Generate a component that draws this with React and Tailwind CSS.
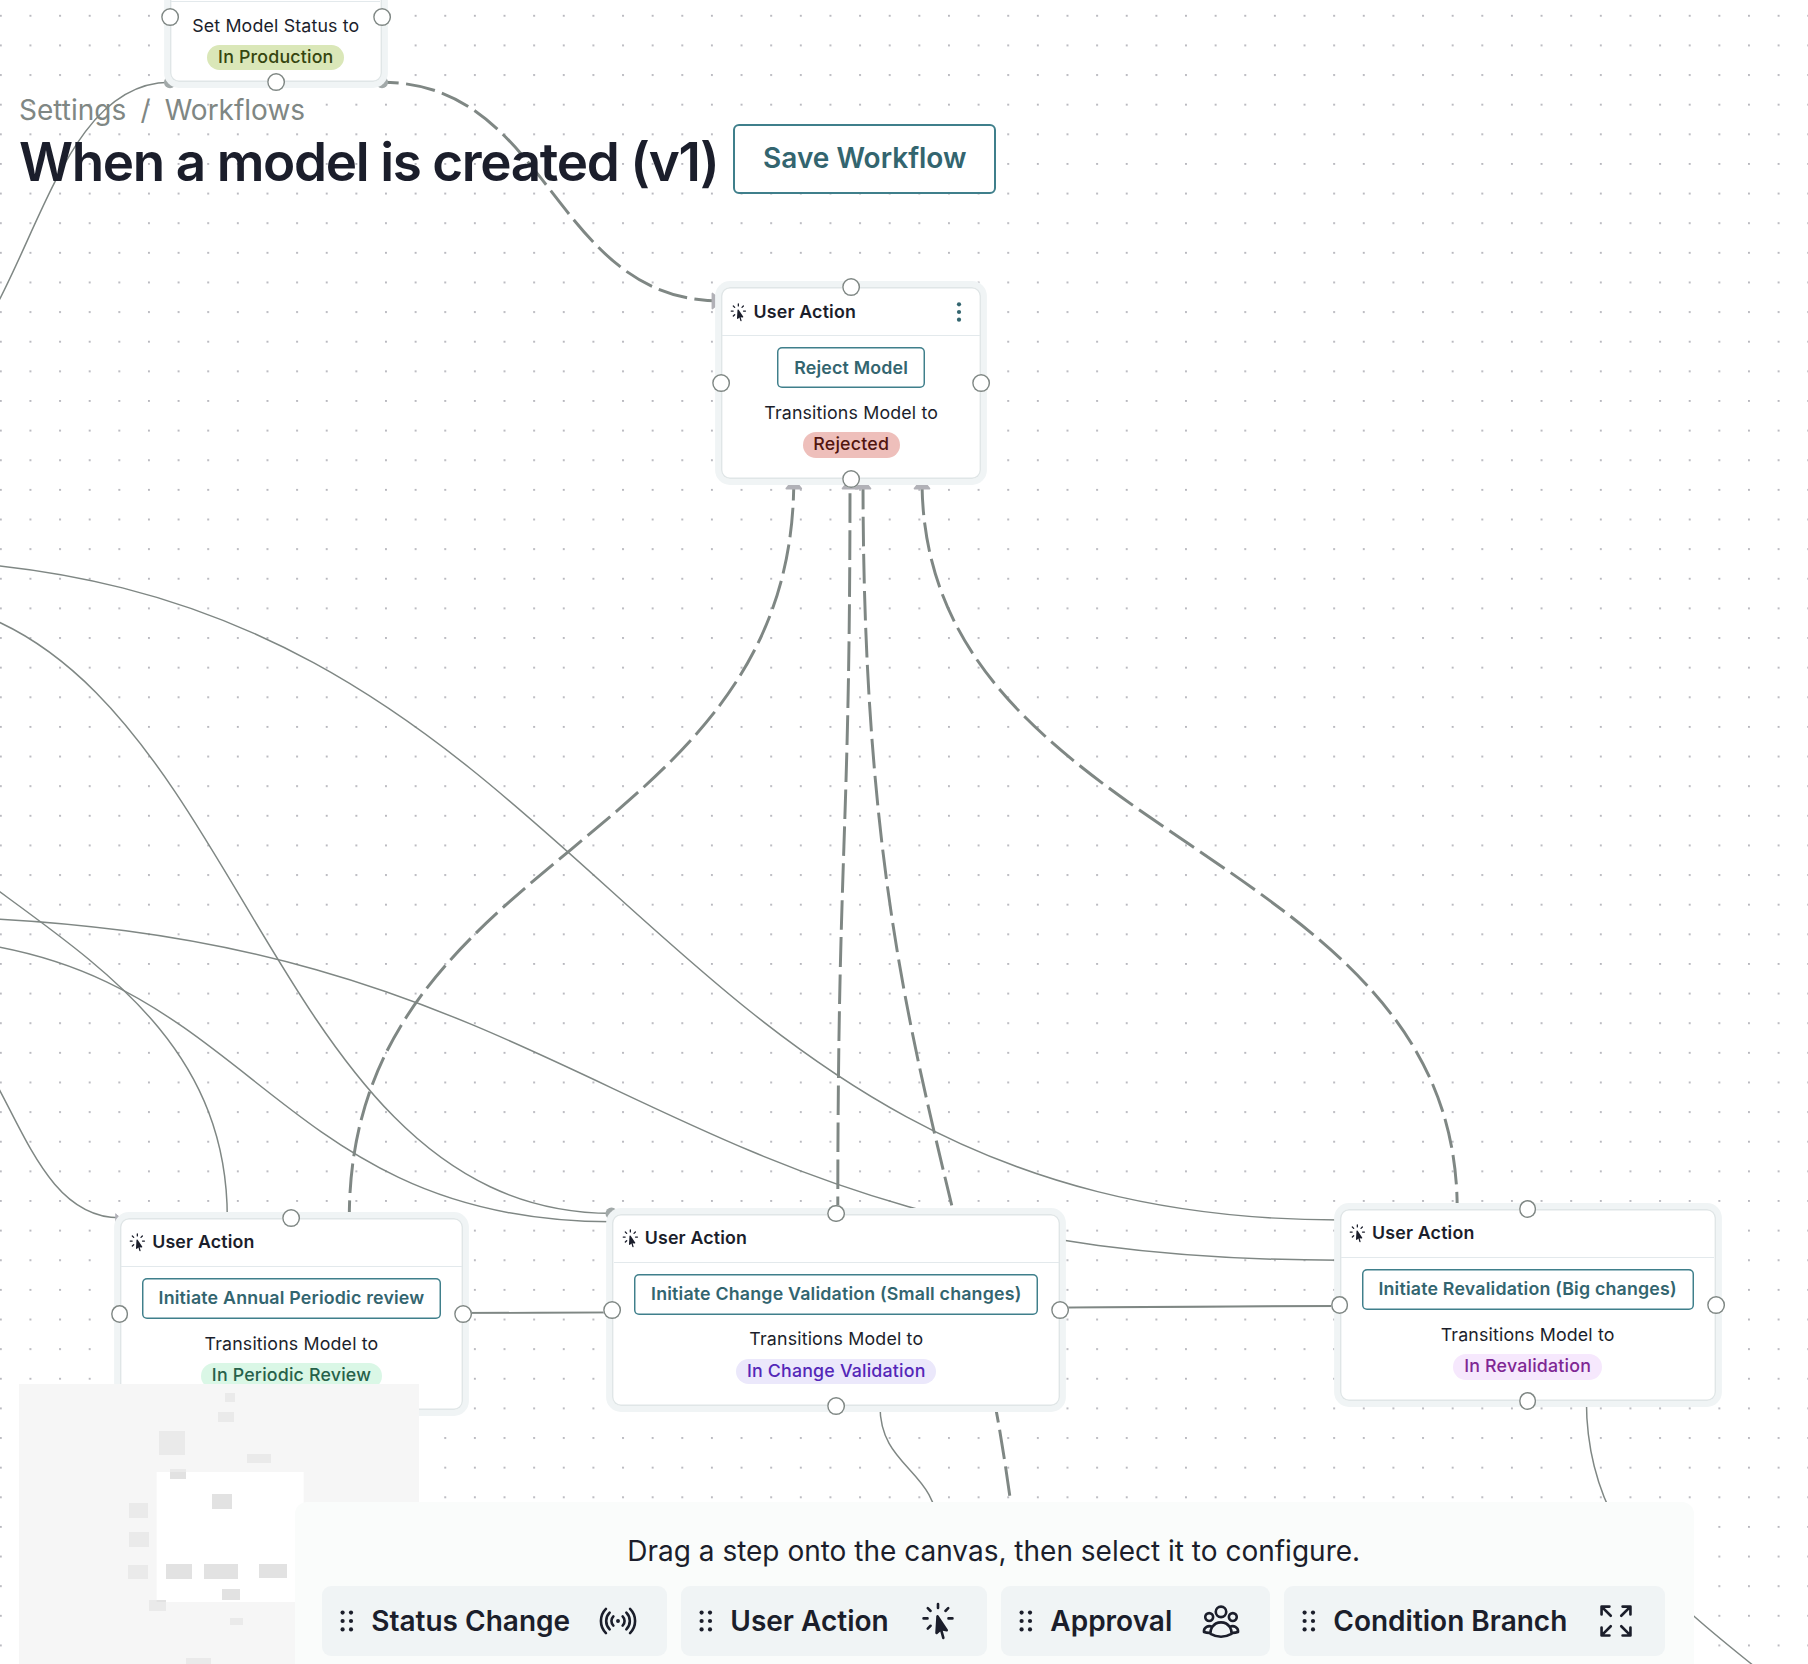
import {
  HiCursorArrowRays,
  HiOutlineArrowsPointingOut,
  HiOutlineSignal,
  HiOutlineUserGroup,
} from "react-icons/hi2";

const nodes = [
  {
    id: "production",
    left: "left-[169.8px]",
    top: "top-[-47.9px]",
    size: "w-[212px] h-[130.2px]",
    text: "Set Model Status to",
    status: "In Production",
    pill: "bg-[#dae7b8] text-[#35450f]",
  },
  {
    id: "reject",
    kind: "User Action",
    left: "left-[721px]",
    top: "top-[286.9px]",
    size: "w-[260.4px] h-[192.6px]",
    button: "Reject Model",
    text: "Transitions Model to",
    status: "Rejected",
    pill: "bg-[#eebfbb] text-[#51150f]",
    menu: true,
  },
  {
    id: "periodic",
    kind: "User Action",
    left: "left-[119.6px]",
    top: "top-[1217.8px]",
    size: "w-[343.8px] h-[192.6px]",
    button: "Initiate Annual Periodic review",
    text: "Transitions Model to",
    status: "In Periodic Review",
    pill: "bg-[#daf7e6] text-[#27614a]",
  },
  {
    id: "change",
    kind: "User Action",
    left: "left-[612.2px]",
    top: "top-[1213.6px]",
    size: "w-[448.2px] h-[192.6px]",
    button: "Initiate Change Validation (Small changes)",
    text: "Transitions Model to",
    status: "In Change Validation",
    pill: "bg-[#ebe8fb] text-[#5427b8]",
  },
  {
    id: "revalidation",
    kind: "User Action",
    left: "left-[1339.5px]",
    top: "top-[1208.8px]",
    size: "w-[376.3px] h-[192.6px]",
    button: "Initiate Revalidation (Big changes)",
    text: "Transitions Model to",
    status: "In Revalidation",
    pill: "bg-[#f6e8fd] text-[#7f2794]",
  },
];

// from, to, direction of the handles
const edges = [
  { from: [170, 82.3], to: [-115, 398], dir: "h" },
  { from: [-120, 559.5], to: [1340, 1220], dir: "h" },
  { from: [-122, 596], to: [612, 1213.3], dir: "h" },
  { from: [-116, 916], to: [1340, 1260.2], dir: "h" },
  { from: [-107, 937.5], to: [612, 1221.8], dir: "h" },
  { from: [-100, 1002.5], to: [120, 1217.8], dir: "h", arrow: "end" },
  { from: [-210.7, 578], to: [227.3, 1218], dir: "v" },
  { from: [880, 1406], to: [938, 1532], dir: "v" },
  { from: [1586.4, 1401], to: [1909, 1921], dir: "v" },
  { from: [463, 1313.1], to: [1340, 1305.8], dir: "h" },
  { from: [463, 1312.8], to: [612, 1312.2], dir: "h" },
  { from: [1060, 1307.8], to: [1340, 1306.2], dir: "h" },
  { from: [382, 82.3], to: [721, 301], dir: "h", dash: 13, arrow: "end" },
  { from: [793.8, 480], to: [349.3, 1218], dir: "v", dash: 9.4, arrow: "start" },
  { from: [850, 480], to: [837.8, 1213.6], dir: "v", dash: 24, arrow: "start" },
  { from: [863, 480], to: [1035, 1908], dir: "v", dash: 0.3, arrow: "start" },
  { from: [922, 480], to: [1457.2, 1209], dir: "v", dash: 31.6, arrow: "start" },
];

const minimapNodes = [
  [675, 69, 30, 27],
  [654, 126, 48, 30],
  [477, 183, 78, 72],
  [741, 252, 72, 27],
  [510, 297, 48, 30],
  [636, 372, 60, 45],
  [387, 399, 57, 45],
  [387, 486, 60, 45],
  [384, 585, 60, 42],
  [498, 582, 78, 45],
  [612, 582, 102, 45],
  [777, 582, 84, 42],
  [666, 657, 54, 33],
  [447, 690, 51, 33],
  [690, 744, 39, 21],
  [558, 864, 75, 30],
];

const steps = [
  { label: "Status Change", Icon: HiOutlineSignal, width: "w-[345px]" },
  { label: "User Action", Icon: HiCursorArrowRays, width: "w-[306px]" },
  { label: "Approval", Icon: HiOutlineUserGroup, width: "w-[269px]" },
  { label: "Condition Branch", Icon: HiOutlineArrowsPointingOut, width: "w-[381px]" },
];

const edgePath = ({ from: [x1, y1], to: [x2, y2], dir }) => {
  const mx = (x1 + x2) / 2;
  const my = (y1 + y2) / 2;
  return dir === "h"
    ? `M${x1} ${y1}C${mx} ${y1} ${mx} ${y2} ${x2} ${y2}`
    : `M${x1} ${y1}C${x1} ${my} ${x2} ${my} ${x2} ${y2}`;
};

const Edges = () => (
  <svg className="absolute inset-0" width="1808" height="1664" fill="none">
    <defs>
      <pattern id="dots" x="-14" y="1" width="29.63" height="29.63" patternUnits="userSpaceOnUse">
        <circle cx="14.8" cy="14.8" r="0.86" fill="#91919a" />
      </pattern>
      <marker
        id="arrow"
        viewBox="-10 -10 20 20"
        markerWidth="12.5"
        markerHeight="12.5"
        refX="-0.4"
        refY="0"
        orient="auto-start-reverse"
      >
        <polyline
          points="-5,-4 0,0 -5,4 -5,-4"
          fill="#b1b1b7"
          stroke="#b1b1b7"
          strokeLinecap="round"
          strokeLinejoin="round"
        />
      </marker>
    </defs>
    <rect width="1808" height="1664" fill="url(#dots)" />
    {edges.map((edge) => (
      <path
        key={edgePath(edge)}
        d={edgePath(edge)}
        stroke="#7f8784"
        strokeWidth={edge.dash === undefined ? 1.48 : 2.96}
        strokeDasharray={edge.dash === undefined ? undefined : "29.63 7.41"}
        strokeDashoffset={edge.dash}
        markerStart={edge.arrow === "start" ? "url(#arrow)" : undefined}
        markerEnd={edge.arrow === "end" ? "url(#arrow)" : undefined}
      />
    ))}
    <circle cx="170" cy="82.3" r="6" fill="#a2a9a9" />
    <circle cx="382" cy="82.3" r="6" fill="#a2a9a9" />
    <circle cx="611.5" cy="1213.6" r="6" fill="#a2a9a9" />
  </svg>
);

const Handle = ({ className }) => (
  <span
    className={`absolute size-[17.8px] rounded-full bg-white shadow-[inset_0_0_0_1.48px_#7f8784] -translate-x-1/2 -translate-y-1/2 ${className}`}
  />
);

const StepNode = ({ node }) => (
  <div
    className={`absolute flex flex-col rounded-[9px] bg-white shadow-[inset_0_0_0_1.4px_#e0e6e7,0_0_0_5.9px_#f0f4f5] ${node.left} ${node.top} ${node.size}`}
  >
    <div className="mx-[1.4px] flex h-[49.6px] shrink-0 items-center border-b border-[#e3e9ec] pt-[1.4px] pl-[6px] pr-[12px]">
      {node.kind && (
        <>
          <HiCursorArrowRays className="size-[20.7px]" />
          <span className="ml-[4.5px] font-semibold">{node.kind}</span>
        </>
      )}
      {node.menu && (
        <svg className="ml-auto" width="18" height="22" viewBox="-9 -11 18 22" fill="#33656f">
          <circle cy="-7.7" r="2.1" />
          <circle r="2.1" />
          <circle cy="7.7" r="2.1" />
        </svg>
      )}
    </div>
    <div className="flex flex-col items-center pt-[10.8px]">
      {node.button && (
        <button className="mb-[11.2px] h-[41.2px] rounded-[5px] px-[16.8px] font-semibold tracking-[0.2px] whitespace-nowrap text-[#33656f] shadow-[inset_0_0_0_1.48px_#3f7f8b]">
          {node.button}
        </button>
      )}
      <p className="leading-[26px]">{node.text}</p>
      <span
        className={`mt-[6.2px] flex h-[25.8px] items-center rounded-full px-[10.8px] font-medium tracking-[0.2px] whitespace-nowrap ${node.pill}`}
      >
        {node.status}
      </span>
    </div>
    <Handle className="left-1/2 top-0" />
    <Handle className="left-0 top-1/2" />
    <Handle className="left-full top-1/2" />
    <Handle className="left-1/2 top-full" />
  </div>
);

const Minimap = () => (
  <svg
    className="absolute left-[19px] top-[1384px]"
    width="400"
    height="300"
    viewBox="57 42 1200 900"
  >
    <rect x="57" y="42" width="1200" height="900" fill="#fff" />
    {minimapNodes.map(([x, y, w, h]) => (
      <rect key={`${x}-${y}`} x={x} y={y} width={w} height={h} fill="#e2e2e2" />
    ))}
    <path
      d="M57 42h1200v900H57zM470 306h441v390H470z"
      fill="#f0f0f0"
      fillOpacity="0.6"
      fillRule="evenodd"
    />
  </svg>
);

const Grip = () => (
  <svg width="14" height="22" viewBox="0 0 14 22" fill="currentColor">
    {[2.6, 11, 19.4].map((y) => (
      <g key={y}>
        <circle cx="2.6" cy={y} r="2.1" />
        <circle cx="11" cy={y} r="2.1" />
      </g>
    ))}
  </svg>
);

const Header = () => (
  <header className="pl-[19px] pt-[90px]">
    <nav className="flex gap-[14.2px] text-[28px] leading-[40px] text-[#7f8784]">
      <span>Settings</span>
      <span>/</span>
      <span>Workflows</span>
    </nav>
    <div className="flex items-start">
      <h1 className="w-[714.3px] pt-[4px] text-[53px] leading-[56px] font-semibold tracking-[-0.026em] whitespace-nowrap">
        When a model is created (v1)
      </h1>
      <button className="mt-[-6px] h-[70px] w-[263px] rounded-[6px] border-2 border-[#3f7f8b] bg-white pb-[2px] text-[28px] font-semibold text-[#33656f]">
        Save Workflow
      </button>
    </div>
  </header>
);

const StepPanel = () => (
  <div className="ml-[294.7px] mt-auto h-[162px] w-[1399px] rounded-t-[12px] bg-[#fafcfb] pl-[27.6px] pr-[28.6px] pt-[28px]">
    <p className="text-center text-[28px] leading-[42px]">
      Drag a step onto the canvas, then select it to configure.
    </p>
    <div className="mt-[14px] flex gap-[14px]">
      {steps.map(({ label, Icon, width }) => (
        <div
          key={label}
          className={`flex h-[70px] shrink-0 items-center rounded-[9px] bg-[#f0f4f5] pl-[17.5px] pr-[28px] ${width}`}
        >
          <Grip />
          <span className="ml-[17.5px] text-[28px] font-semibold whitespace-nowrap">{label}</span>
          <Icon className="ml-auto size-[42px]" />
        </div>
      ))}
    </div>
  </div>
);

export default function App() {
  return (
    <div className="relative h-[1664px] w-[1808px] overflow-hidden bg-white font-['Inter',sans-serif] text-[#1b1e2b]">
      <div className="absolute inset-0 text-[17.78px] tracking-[0.17px]">
        <Edges />
        {nodes.map((node) => (
          <StepNode key={node.id} node={node} />
        ))}
        <Minimap />
      </div>
      <div className="relative flex h-full flex-col">
        <Header />
        <StepPanel />
      </div>
    </div>
  );
}
